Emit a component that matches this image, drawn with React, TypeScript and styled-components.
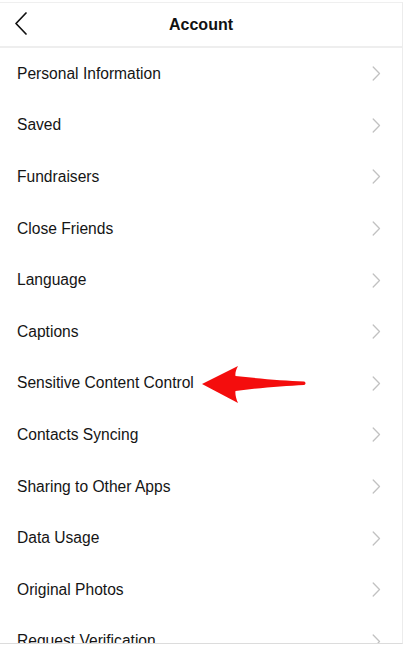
import React from 'react';
import styled, { createGlobalStyle } from 'styled-components';

const items = [
  'Personal Information',
  'Saved',
  'Fundraisers',
  'Close Friends',
  'Language',
  'Captions',
  'Sensitive Content Control',
  'Contacts Syncing',
  'Sharing to Other Apps',
  'Data Usage',
  'Original Photos',
  'Request Verification',
];

const App: React.FC = () => {
  return (
    <>
      <GlobalStyle />
      <Frame>
        <Header>
          <BackButton aria-label="Back">
            <svg width="14" height="23" viewBox="0 0 14 23" fill="none">
              <path d="M12 1 L2 11.5 L12 22" stroke="#111" strokeWidth="1.7" strokeLinecap="round" strokeLinejoin="round" />
            </svg>
          </BackButton>
          <Title>Account</Title>
        </Header>

        <List>
          {items.map((label) => (
            <Row key={label}>
              <RowLabel>{label}</RowLabel>
              <svg width="9" height="15" viewBox="0 0 9 15" fill="none">
                <path d="M1.2 1 L7.5 7.5 L1.2 14" stroke="#c2c2c2" strokeWidth="1.3" strokeLinecap="round" strokeLinejoin="round" />
              </svg>
            </Row>
          ))}
        </List>

        {/* red annotation arrow pointing at Sensitive Content Control */}
        <Arrow width="106" height="40" viewBox="0 0 106 40">
          <path
            d="M1 19 L37 1 C35 5 34 8 34.5 11 C57 13.5 83 15.5 103 16.5 C105 17 105 19.5 103 20 C83 21 57 23 34.5 26 C34 29 35 33 37 38 Z"
            fill="#f40d0d"
          />
        </Arrow>
      </Frame>
    </>
  );
};

const GlobalStyle = createGlobalStyle`
  body {
    margin: 0;
    background: #ffffff;
    font-family: "Liberation Sans", Arial, sans-serif;
  }
`;

const Frame = styled.div`
  position: relative;
  width: 402px;
  height: 640px;
  margin-top: 2px;
  border-top: 1px solid #efefef;
  border-right: 1px solid #ececec;
  border-bottom: 1px solid #dcdcdc;
  overflow: hidden;
  background: #fff;
`;

const Header = styled.div`
  position: relative;
  height: 45px;
  box-sizing: border-box;
  padding-top: 1px;
  display: flex;
  align-items: center;
  justify-content: center;
  border-bottom: 2px solid #eeeeee;
`;

const BackButton = styled.button`
  position: absolute;
  left: 14px;
  top: 9px;
  padding: 0;
  border: none;
  background: none;
  display: flex;
`;

const Title = styled.h1`
  margin: 0;
  font-size: 16px;
  font-weight: 700;
  color: #111;
`;

const List = styled.div`
  display: flex;
  flex-direction: column;
`;

const Row = styled.div`
  height: 51.6px;
  flex-shrink: 0;
  display: flex;
  align-items: center;
  justify-content: space-between;
  padding: 0 21px 0 17px;
`;

const RowLabel = styled.span`
  font-size: 15.6px;
  color: #151515;
`;

const Arrow = styled.svg`
  position: absolute;
  left: 201px;
  top: 362px;
`;

export default App;
